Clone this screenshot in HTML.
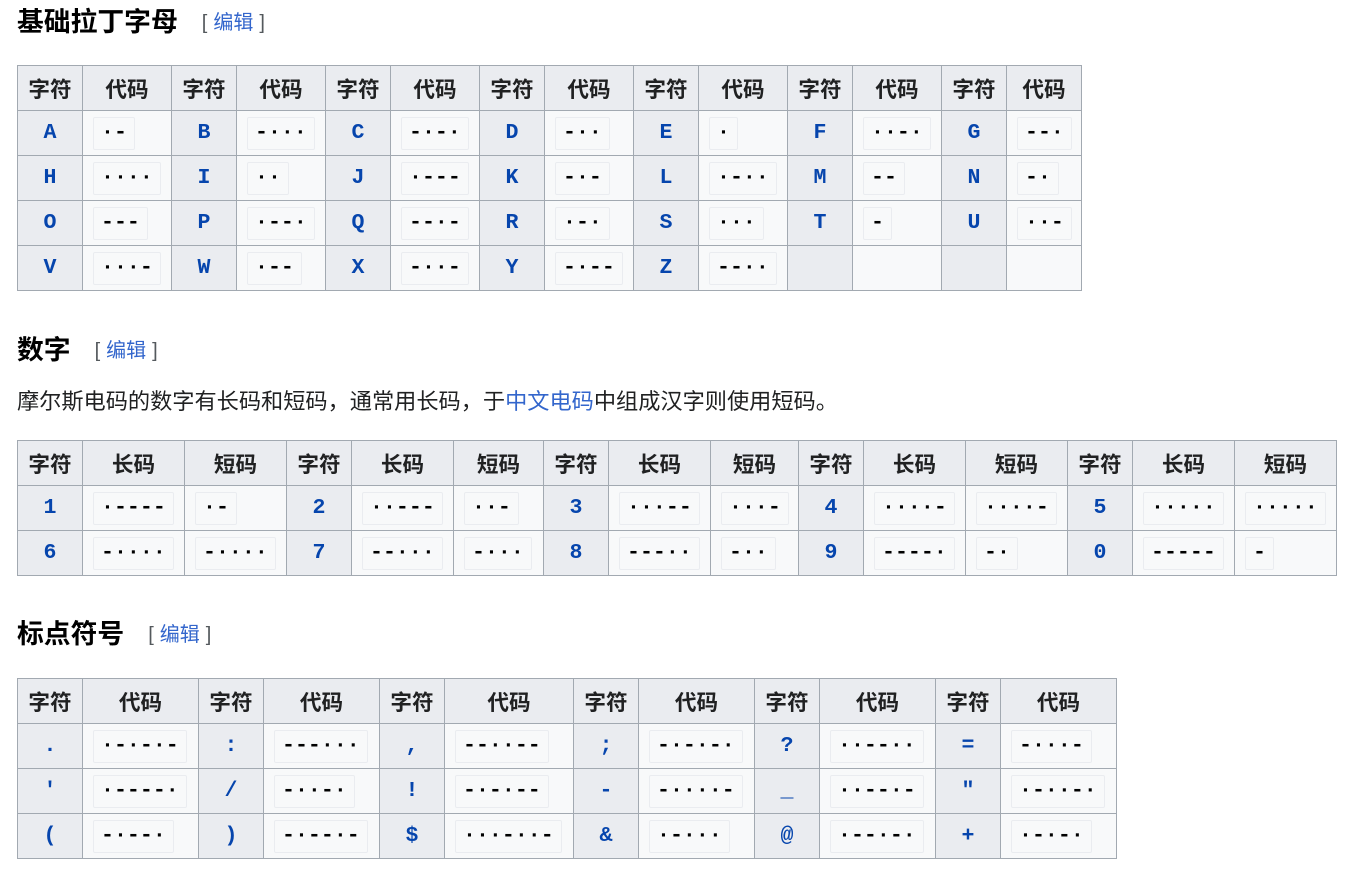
<!DOCTYPE html>
<html><head><meta charset="utf-8">
<style>
html,body{margin:0;padding:0;background:#fff;width:1358px;height:885px;overflow:hidden;position:relative;font-family:"Liberation Sans","Noto Sans CJK SC",sans-serif;color:#202122}
.h{position:absolute;left:17px;font-weight:bold;font-size:26.8px;line-height:34px;color:#000}
.h .e{font-weight:normal;font-size:20px;color:#54595d;margin-left:24px;position:relative;top:-2px}
.h .e a{color:#3366cc;text-decoration:none;margin:0 6px}
p{position:absolute;left:17px;top:387px;margin:0;font-size:22.2px;line-height:30px;white-space:nowrap}
p a{color:#3366cc;text-decoration:none}
table{position:absolute;left:17px;border-collapse:collapse;table-layout:fixed}
td,th{border:1px solid #a2a9b1;height:45px;padding:0;box-sizing:border-box}
th{background:#eaecf0;font-size:21.6px;font-weight:bold;text-align:center;color:#202122}
td.l{background:#eaecf0;text-align:center;font-family:"Liberation Mono",monospace;font-weight:bold;font-size:21.6px;color:#0645ad}
td.c{background:#f8f9fa;padding-left:10px;text-align:left}
code{display:inline-block;font-family:"Liberation Mono",monospace;font-weight:bold;font-size:21.6px;line-height:31px;padding:0 7px;border:1px solid #eaecf0;border-radius:2px;background:#f8f9fa;color:#000;vertical-align:middle}
</style></head><body>

<div class="h" style="top:5px">基础拉丁字母<span class="e">[<a>编辑</a>]</span></div>
<table style="top:65px">
<colgroup><col style="width:65px"><col style="width:89px"><col style="width:65px"><col style="width:89px"><col style="width:65px"><col style="width:89px"><col style="width:65px"><col style="width:89px"><col style="width:65px"><col style="width:89px"><col style="width:65px"><col style="width:89px"><col style="width:65px"><col style="width:75px"></colgroup>
<tr><th>字符</th><th>代码</th><th>字符</th><th>代码</th><th>字符</th><th>代码</th><th>字符</th><th>代码</th><th>字符</th><th>代码</th><th>字符</th><th>代码</th><th>字符</th><th>代码</th></tr>
<tr><td class="l">A</td><td class="c"><code>·-</code></td><td class="l">B</td><td class="c"><code>-···</code></td><td class="l">C</td><td class="c"><code>-·-·</code></td><td class="l">D</td><td class="c"><code>-··</code></td><td class="l">E</td><td class="c"><code>·</code></td><td class="l">F</td><td class="c"><code>··-·</code></td><td class="l">G</td><td class="c"><code>--·</code></td></tr>
<tr><td class="l">H</td><td class="c"><code>····</code></td><td class="l">I</td><td class="c"><code>··</code></td><td class="l">J</td><td class="c"><code>·---</code></td><td class="l">K</td><td class="c"><code>-·-</code></td><td class="l">L</td><td class="c"><code>·-··</code></td><td class="l">M</td><td class="c"><code>--</code></td><td class="l">N</td><td class="c"><code>-·</code></td></tr>
<tr><td class="l">O</td><td class="c"><code>---</code></td><td class="l">P</td><td class="c"><code>·--·</code></td><td class="l">Q</td><td class="c"><code>--·-</code></td><td class="l">R</td><td class="c"><code>·-·</code></td><td class="l">S</td><td class="c"><code>···</code></td><td class="l">T</td><td class="c"><code>-</code></td><td class="l">U</td><td class="c"><code>··-</code></td></tr>
<tr><td class="l">V</td><td class="c"><code>···-</code></td><td class="l">W</td><td class="c"><code>·--</code></td><td class="l">X</td><td class="c"><code>-··-</code></td><td class="l">Y</td><td class="c"><code>-·--</code></td><td class="l">Z</td><td class="c"><code>--··</code></td><td class="l"></td><td class="c"></td><td class="l"></td><td class="c"></td></tr>
</table>

<div class="h" style="top:333px">数字<span class="e">[<a>编辑</a>]</span></div>
<p>摩尔斯电码的数字有长码和短码，通常用长码，于<a>中文电码</a>中组成汉字则使用短码。</p>
<table style="top:440px">
<colgroup><col style="width:65px"><col style="width:102px"><col style="width:102px"><col style="width:65px"><col style="width:102px"><col style="width:90px"><col style="width:65px"><col style="width:102px"><col style="width:88px"><col style="width:65px"><col style="width:102px"><col style="width:102px"><col style="width:65px"><col style="width:102px"><col style="width:102px"></colgroup>
<tr><th>字符</th><th>长码</th><th>短码</th><th>字符</th><th>长码</th><th>短码</th><th>字符</th><th>长码</th><th>短码</th><th>字符</th><th>长码</th><th>短码</th><th>字符</th><th>长码</th><th>短码</th></tr>
<tr><td class="l">1</td><td class="c"><code>·----</code></td><td class="c"><code>·-</code></td><td class="l">2</td><td class="c"><code>··---</code></td><td class="c"><code>··-</code></td><td class="l">3</td><td class="c"><code>···--</code></td><td class="c"><code>···-</code></td><td class="l">4</td><td class="c"><code>····-</code></td><td class="c"><code>····-</code></td><td class="l">5</td><td class="c"><code>·····</code></td><td class="c"><code>·····</code></td></tr>
<tr><td class="l">6</td><td class="c"><code>-····</code></td><td class="c"><code>-····</code></td><td class="l">7</td><td class="c"><code>--···</code></td><td class="c"><code>-···</code></td><td class="l">8</td><td class="c"><code>---··</code></td><td class="c"><code>-··</code></td><td class="l">9</td><td class="c"><code>----·</code></td><td class="c"><code>-·</code></td><td class="l">0</td><td class="c"><code>-----</code></td><td class="c"><code>-</code></td></tr>
</table>

<div class="h" style="top:617px">标点符号<span class="e">[<a>编辑</a>]</span></div>
<table style="top:678px">
<colgroup><col style="width:65px"><col style="width:116px"><col style="width:65px"><col style="width:116px"><col style="width:65px"><col style="width:129px"><col style="width:65px"><col style="width:116px"><col style="width:65px"><col style="width:116px"><col style="width:65px"><col style="width:116px"></colgroup>
<tr><th>字符</th><th>代码</th><th>字符</th><th>代码</th><th>字符</th><th>代码</th><th>字符</th><th>代码</th><th>字符</th><th>代码</th><th>字符</th><th>代码</th></tr>
<tr><td class="l">.</td><td class="c"><code>·-·-·-</code></td><td class="l">:</td><td class="c"><code>---···</code></td><td class="l">,</td><td class="c"><code>--··--</code></td><td class="l">;</td><td class="c"><code>-·-·-·</code></td><td class="l">?</td><td class="c"><code>··--··</code></td><td class="l">=</td><td class="c"><code>-···-</code></td></tr>
<tr><td class="l">'</td><td class="c"><code>·----·</code></td><td class="l">/</td><td class="c"><code>-··-·</code></td><td class="l">!</td><td class="c"><code>-·-·--</code></td><td class="l">-</td><td class="c"><code>-····-</code></td><td class="l">_</td><td class="c"><code>··--·-</code></td><td class="l">"</td><td class="c"><code>·-··-·</code></td></tr>
<tr><td class="l">(</td><td class="c"><code>-·--·</code></td><td class="l">)</td><td class="c"><code>-·--·-</code></td><td class="l">$</td><td class="c"><code>···-··-</code></td><td class="l">&amp;</td><td class="c"><code>·-···</code></td><td class="l">@</td><td class="c"><code>·--·-·</code></td><td class="l">+</td><td class="c"><code>·-·-·</code></td></tr>
</table>
</body></html>
